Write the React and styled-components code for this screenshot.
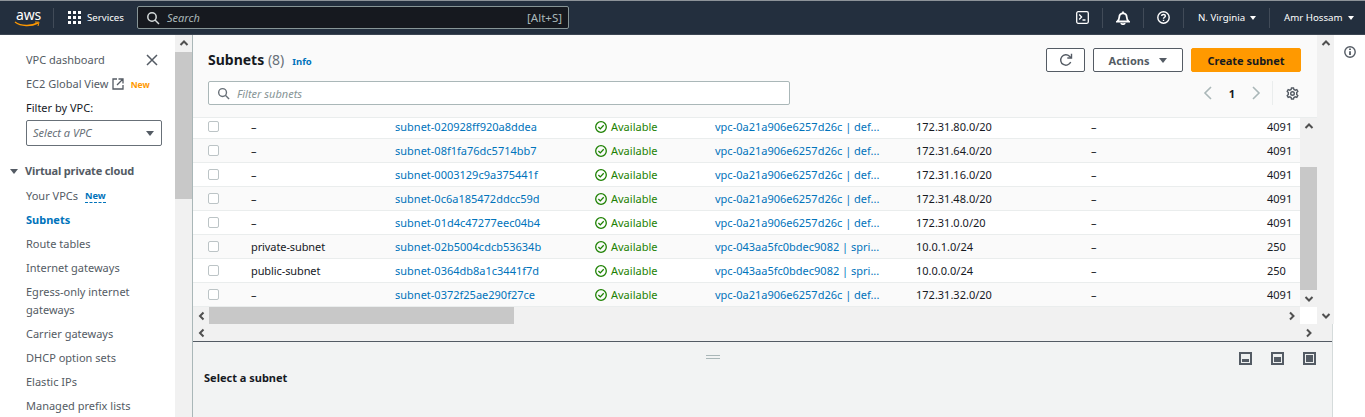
import React from 'react';
import styled, { createGlobalStyle } from 'styled-components';

const GlobalStyle = createGlobalStyle`
  html, body {
    margin: 0;
    padding: 0;
    height: 417px;
    overflow: hidden;
    background: #fff;
    font-family: "Noto Sans", "Open Sans", sans-serif;
    font-size: 11px;
    color: #16191f;
  }
  * { box-sizing: border-box; }
`;

const Page = styled.div`
  width: 1365px;
  height: 417px;
  display: flex;
  flex-direction: column;
  overflow: hidden;
`;

/* top nav */
const Nav = styled.header`
  height: 35px;
  flex: none;
  background: #232f3e;
  border-top: 1px solid #8d9399;
  border-bottom: 1px solid #3b4552;
  display: flex;
  align-items: center;
  color: #fff;
`;

const Logo = styled.div`
  height: 18px;
  margin-left: 14px;
  width: 39px;
  position: relative;
  span {
    display: block;
    margin-left: 2px;
    font-size: 14px;
    line-height: 12px;
    letter-spacing: -0.2px;
  }
  svg {
    position: absolute;
    left: 0;
    top: 12px;
  }
`;

const NavSep = styled.div`
  width: 1px;
  height: 20px;
  background: #414b58;
`;

const Dots = styled.div`
  margin-left: 14px;
  width: 13px;
  height: 13px;
  display: grid;
  grid-template-columns: repeat(3, 3px);
  grid-template-rows: repeat(3, 3px);
  gap: 2px;
  i { background: #fff; }
`;

const ServicesLabel = styled.span`
  margin-left: 6px;
  font-size: 9.7px;
  width: 50px;
`;

const SearchBox = styled.div`
  width: 432px;
  height: 23px;
  background: #16191f;
  border: 1px solid #879596;
  border-radius: 2px;
  display: flex;
  align-items: center;
  padding: 0 6px 0 8px;
  gap: 7px;
  color: #aab7b8;
  em { font-size: 11px; flex: 1; }
  span { font-size: 11.5px; }
`;

const NavRight = styled.div`
  margin-left: auto;
  display: flex;
  align-items: center;
`;

const NavIconCell = styled.div`
  width: ${(p) => p.$w}px;
  display: flex;
  justify-content: center;
`;

const NavMenu = styled.div`
  display: flex;
  align-items: center;
  gap: 5px;
  font-size: 9.7px;
  width: ${(p) => p.$w}px;
  padding-left: ${(p) => p.$pad}px;
`;

const Caret = styled.i`
  width: 0;
  height: 0;
  border-left: ${(p) => p.$size || 3.5}px solid transparent;
  border-right: ${(p) => p.$size || 3.5}px solid transparent;
  border-top: ${(p) => (p.$size || 3.5) + 1}px solid ${(p) => p.$color || '#fff'};
  flex: none;
`;

/* body */
const Body = styled.div`
  flex: 1;
  display: flex;
  min-height: 0;
`;

const Sidebar = styled.aside`
  width: 175px;
  flex: none;
  padding: 13px 0 0 26px;
  color: #545b64;
  line-height: 18px;
  position: relative;
`;

const NavItem = styled.div`
  padding: 3px 0;
  display: flex;
  align-items: center;
  gap: ${(p) => p.$gap || 0}px;
  width: 140px;
  color: ${(p) => (p.$active ? '#0073bb' : '#545b64')};
  font-weight: ${(p) => (p.$active ? 700 : 400)};
`;

const CloseBtn = styled.div`
  position: absolute;
  top: 19px;
  left: 146px;
  line-height: 0;
`;

const FilterLabel = styled.div`
  color: #16191f;
  padding: 3px 0;
`;

const VpcSelect = styled.div`
  width: 136px;
  height: 26px;
  border: 1px solid #687078;
  border-radius: 2px;
  display: flex;
  align-items: center;
  justify-content: space-between;
  padding: 0 7px 0 6px;
  font-style: italic;
  color: #687078;
`;

const SectionTitle = styled.div`
  margin: 13px 0 1px -16px;
  display: flex;
  align-items: center;
  gap: 7px;
  font-weight: 700;
  letter-spacing: -0.15px;
  padding: 3px 0;
`;

const NewTag = styled.span`
  font-size: ${(p) => p.$size}px;
  font-weight: 700;
  color: ${(p) => p.$color};
  line-height: 13px;
  border-bottom: ${(p) => (p.$dotted ? '1px dashed #0073bb' : 'none')};
`;

const VScroll = styled.div`
  width: 17px;
  flex: none;
  background: #f1f1f1;
  display: flex;
  flex-direction: column;
  align-items: center;
`;

const ArrowCell = styled.div`
  height: 17px;
  width: 100%;
  flex: none;
  display: flex;
  align-items: center;
  justify-content: center;
  margin-top: ${(p) => (p.$bottom ? 'auto' : 0)};
`;

const Thumb = styled.div`
  width: 100%;
  height: ${(p) => p.$h}px;
  margin-top: ${(p) => p.$top || 0}px;
  background: #c8c8c8;
`;

const Main = styled.main`
  width: 1141px;
  flex: none;
  display: flex;
  flex-direction: column;
  border-left: 1px solid #aab7b8;
  border-right: 1px solid #d5dbdb;
`;

const MainScroll = styled.div`
  height: 289px;
  flex: none;
  display: flex;
`;

const MainContent = styled.div`
  width: 1124px;
  flex: none;
  display: flex;
  flex-direction: column;
`;

const TableHead = styled.div`
  height: 83px;
  flex: none;
  background: #fafafa;
  border-bottom: 1px solid #eaeded;
  padding: 13px 16px 0 15px;
`;

const HeadTop = styled.div`
  display: flex;
  align-items: center;
  height: 24px;
`;

const Title = styled.h1`
  margin: 0 0 2px;
  font-size: 14px;
  font-weight: 700;
  color: #16191f;
  span { font-weight: 400; color: #687078; }
`;

const InfoLink = styled.a`
  font-size: 9.5px;
  font-weight: 700;
  color: #0073bb;
  margin-left: 8px;
  padding-top: 2px;
`;

const Actions = styled.div`
  margin-left: auto;
  display: flex;
  gap: 8px;
`;

const Button = styled.button`
  width: ${(p) => p.$w}px;
  height: 24px;
  border-radius: 2px;
  border: 1px solid ${(p) => (p.$primary ? '#ff9900' : '#545b64')};
  background: ${(p) => (p.$primary ? '#ff9900' : '#fff')};
  color: ${(p) => (p.$primary ? '#16191f' : '#545b64')};
  font: 700 11px "Noto Sans", sans-serif;
  display: flex;
  align-items: center;
  justify-content: center;
  gap: 10px;
  padding: 0;
`;

const HeadBottom = styled.div`
  display: flex;
  align-items: center;
  height: 24px;
  margin-top: 9px;
`;

const FilterInput = styled.div`
  width: 582px;
  height: 24px;
  background: #fff;
  border: 1px solid #aab7b8;
  border-radius: 2px;
  display: flex;
  align-items: center;
  gap: 7px;
  padding: 0 8px;
  em { color: #879596; }
`;

const Pager = styled.div`
  margin-left: auto;
  display: flex;
  align-items: center;
  height: 24px;
  padding-right: 2px;
  font-weight: 700;
`;

const PageNum = styled.span`
  width: 34px;
  text-align: center;
`;

const PagerSep = styled.div`
  width: 1px;
  height: 24px;
  background: #eaeded;
  margin: 0 13px 0 9px;
`;

const TableWrap = styled.div`
  height: 189px;
  flex: none;
  display: flex;
  overflow: hidden;
`;

const Rows = styled.div`
  width: 1107px;
  flex: none;
  overflow: hidden;
`;

const RowsInner = styled.div`
  margin-top: -3px;
`;

const Row = styled.div`
  height: 24px;
  display: grid;
  grid-template-columns: 59px 143px 200px 120px 201px 175px 176px 33px;
  align-items: center;
  background: ${(p) => (p.$odd ? '#fafafa' : '#fff')};
  border-bottom: 1px solid #eaeded;
  white-space: nowrap;
`;

const CheckCell = styled.div`
  padding-left: 15px;
  line-height: 0;
`;

const Check = styled.i`
  display: inline-block;
  width: 11px;
  height: 11px;
  background: #fff;
  border: 1px solid #bcc4c6;
  border-radius: 2px;
`;

const NameCell = styled.div`
  margin-left: -1px;
  letter-spacing: -0.1px;
`;

const IdLink = styled.a`
  color: #0073bb;
`;

const Status = styled.div`
  color: #1d8102;
  display: flex;
  align-items: center;
  gap: 4px;
`;

const HScroll = styled.div`
  height: 17px;
  flex: none;
  background: #f1f1f1;
  display: flex;
  align-items: stretch;
  width: ${(p) => p.$w}px;
`;

const HArrow = styled.div`
  width: 17px;
  flex: none;
  display: flex;
  align-items: center;
  justify-content: center;
  margin-left: ${(p) => (p.$end ? 'auto' : 0)};
  margin-right: ${(p) => p.$right || 0}px;
`;

const HThumb = styled.div`
  width: 305px;
  margin-left: -1px;
  background: #c8c8c8;
`;

const SplitPanel = styled.section`
  flex: 1;
  background: #f2f3f3;
  border-top: 1px solid #545b64;
  position: relative;
  padding: 27px 0 0 11px;
  font-weight: 700;
  line-height: 18px;
`;

const Grip = styled.div`
  position: absolute;
  left: 513px;
  top: 13px;
  width: 14px;
  height: 4px;
  border-top: 1px solid #aab7b8;
  border-bottom: 1px solid #aab7b8;
`;

const SplitTools = styled.div`
  position: absolute;
  top: 10px;
  right: 16px;
  display: flex;
  gap: 19px;
`;

const SplitIcon = styled.div`
  width: 13px;
  height: 13px;
  border: 2px solid #545b64;
  padding: 1px;
  background: linear-gradient(to top, #545b64 ${(p) => p.$fill}%, #eef0f0 ${(p) => p.$fill}%) content-box, #eef0f0;
`;

const Rail = styled.aside`
  flex: 1;
  padding: 11px 0 0 11px;
`;

function Chevron({ dir = 'up', color = '#505050' }) {
  const d = {
    up: 'M1.5 6 L5 2.5 L8.5 6',
    down: 'M1.5 3 L5 6.5 L8.5 3',
    left: 'M6.5 1.5 L3 5 L6.5 8.5',
    right: 'M3 1.5 L6.5 5 L3 8.5',
  }[dir];
  return (
    <svg width="10" height="10" viewBox="0 0 10 10" fill="none">
      <path d={d} stroke={color} strokeWidth="2" />
    </svg>
  );
}

function PagerChevron({ flip }) {
  return (
    <svg width="14" height="14" viewBox="0 0 14 14" fill="none" stroke="#aab7b8" strokeWidth="1.6">
      <path d={flip ? 'M4 1 L10 7 L4 13' : 'M10 1 L4 7 L10 13'} />
    </svg>
  );
}

function SearchIcon({ color, size = 14 }) {
  return (
    <svg width={size} height={size} viewBox="0 0 14 14" fill="none" stroke={color} strokeWidth="1.5">
      <circle cx="6" cy="6" r="4.2" />
      <path d="M9 9 L13 13" />
    </svg>
  );
}

function TerminalIcon() {
  return (
    <svg width="13" height="13" viewBox="0 0 13 13" fill="none" stroke="#fff" strokeWidth="1.3">
      <rect x="0.7" y="0.7" width="11.6" height="11.6" rx="1.5" />
      <path d="M3.2 3.5 L5.6 6 L3.2 8.5 M6.5 9 H9.5" />
    </svg>
  );
}

function BellIcon() {
  return (
    <svg width="14" height="14" viewBox="0 0 14 14" fill="none" stroke="#fff" strokeWidth="1.8">
      <path d="M1.2 10.5 C3 9.5 3.2 8 3.3 6 C3.4 3.5 5 2.3 7 2.3 C9 2.3 10.6 3.5 10.7 6 C10.8 8 11 9.5 12.8 10.5 Z" />
      <path d="M7 0.5 V2.3 M5.2 12 C5.4 13.6 8.6 13.6 8.8 12" />
    </svg>
  );
}

function HelpIcon() {
  return (
    <svg width="13" height="13" viewBox="0 0 13 13" fill="none" stroke="#fff" strokeWidth="1.4">
      <circle cx="6.5" cy="6.5" r="5.7" />
      <path d="M4.6 5 C4.7 2.9 8.4 2.9 8.4 5 C8.4 6.3 6.5 6.3 6.5 7.8 M6.5 8.8 V10" />
    </svg>
  );
}

function ExternalIcon() {
  return (
    <svg width="12" height="12" viewBox="0 0 12 12" fill="none" stroke="#545b64" strokeWidth="1.3">
      <path d="M5 1 H1 V11 H11 V7 M6.5 1 H11 V5.5 M11 1 L5 7" />
    </svg>
  );
}

function RefreshIcon() {
  return (
    <svg width="14" height="14" viewBox="0 0 14 14" fill="none" stroke="#545b64" strokeWidth="1.4">
      <path d="M11.7 9 A5.2 5.2 0 1 1 10.5 3.2 L12 4.8" />
      <path d="M12.5 0.8 V5 H8.3" />
    </svg>
  );
}

function GearIcon() {
  return (
    <svg width="13" height="13" viewBox="0 0 13 13" fill="none" stroke="#545b64" strokeWidth="1.4">
      <circle cx="6.5" cy="6.5" r="1.8" />
      <path d="M5.5 1 H7.5 L7.9 2.5 L9.3 3.2 L10.8 2.7 L11.8 4.4 L10.7 5.5 V7.5 L11.8 8.6 L10.8 10.3 L9.3 9.8 L7.9 10.5 L7.5 12 H5.5 L5.1 10.5 L3.7 9.8 L2.2 10.3 L1.2 8.6 L2.3 7.5 V5.5 L1.2 4.4 L2.2 2.7 L3.7 3.2 L5.1 2.5 Z" />
    </svg>
  );
}

function CheckCircle() {
  return (
    <svg width="12" height="12" viewBox="0 0 12 12" fill="none" stroke="#1d8102" strokeWidth="1.3">
      <circle cx="6" cy="6" r="5.3" />
      <path d="M3.4 6 L5.3 7.9 L8.7 4.3" />
    </svg>
  );
}

function InfoCircle() {
  return (
    <svg width="12" height="12" viewBox="0 0 12 12" fill="none" stroke="#545b64" strokeWidth="1.4">
      <circle cx="6" cy="6" r="5.2" />
      <path d="M6 5.2 V9 M6 2.6 V4" strokeWidth="1.8" />
    </svg>
  );
}

const subnets = [
  ['–', 'subnet-020928ff920a8ddea', 'vpc-0a21a906e6257d26c | def...', '172.31.80.0/20', '4091'],
  ['–', 'subnet-08f1fa76dc5714bb7', 'vpc-0a21a906e6257d26c | def...', '172.31.64.0/20', '4091'],
  ['–', 'subnet-0003129c9a375441f', 'vpc-0a21a906e6257d26c | def...', '172.31.16.0/20', '4091'],
  ['–', 'subnet-0c6a185472ddcc59d', 'vpc-0a21a906e6257d26c | def...', '172.31.48.0/20', '4091'],
  ['–', 'subnet-01d4c47277eec04b4', 'vpc-0a21a906e6257d26c | def...', '172.31.0.0/20', '4091'],
  ['private-subnet', 'subnet-02b5004cdcb53634b', 'vpc-043aa5fc0bdec9082 | spri...', '10.0.1.0/24', '250'],
  ['public-subnet', 'subnet-0364db8a1c3441f7d', 'vpc-043aa5fc0bdec9082 | spri...', '10.0.0.0/24', '250'],
  ['–', 'subnet-0372f25ae290f27ce', 'vpc-0a21a906e6257d26c | def...', '172.31.32.0/20', '4091'],
];

const navLinks = ['Route tables', 'Internet gateways', 'Egress-only internet gateways', 'Carrier gateways', 'DHCP option sets', 'Elastic IPs', 'Managed prefix lists'];

export default function App() {
  return (
    <Page>
      <GlobalStyle />
      <Nav>
        <Logo>
          <span>aws</span>
          <svg width="26" height="7" viewBox="0 0 26 7" fill="none">
            <path d="M1 1 C7 5.5 17 5.5 24 2" stroke="#f90" strokeWidth="1.4" />
            <path d="M21 1 L25 1.2 L24 5" stroke="#f90" strokeWidth="1" />
          </svg>
        </Logo>
        <NavSep />
        <Dots>{Array.from({ length: 9 }, (_, i) => <i key={i} />)}</Dots>
        <ServicesLabel>Services</ServicesLabel>
        <SearchBox>
          <SearchIcon color="#d5dbdb" />
          <em>Search</em>
          <span>[Alt+S]</span>
        </SearchBox>
        <NavRight>
          <NavIconCell $w={39}><TerminalIcon /></NavIconCell>
          <NavSep />
          <NavIconCell $w={40}><BellIcon /></NavIconCell>
          <NavSep />
          <NavIconCell $w={39}><HelpIcon /></NavIconCell>
          <NavSep />
          <NavMenu $w={85} $pad={14}>N. Virginia <Caret /></NavMenu>
          <NavSep />
          <NavMenu $w={95} $pad={14}>Amr Hossam <Caret /></NavMenu>
        </NavRight>
      </Nav>
      <Body>
        <Sidebar>
          <CloseBtn>
            <svg width="12" height="12" viewBox="0 0 12 12" stroke="#545b64" strokeWidth="1.5">
              <path d="M1 1 L11 11 M11 1 L1 11" />
            </svg>
          </CloseBtn>
          <NavItem>VPC dashboard</NavItem>
          <NavItem $gap={4}>EC2 Global View <ExternalIcon /> <NewTag $color="#ff9900" $size={8.5}>&nbsp;New</NewTag></NavItem>
          <FilterLabel>Filter by VPC:</FilterLabel>
          <VpcSelect>Select a VPC <Caret $size={4.5} $color="#545b64" /></VpcSelect>
          <SectionTitle><Caret $size={4.5} $color="#545b64" />Virtual private cloud</SectionTitle>
          <NavItem $gap={7}>Your VPCs <NewTag $color="#0073bb" $size={9.2} $dotted>New</NewTag></NavItem>
          <NavItem $active>Subnets</NavItem>
          {navLinks.map((l) => <NavItem key={l}>{l}</NavItem>)}
        </Sidebar>
        <VScroll>
          <ArrowCell><Chevron dir="up" /></ArrowCell>
          <Thumb $h={147} />
        </VScroll>
        <Main>
          <MainScroll>
            <MainContent>
              <TableHead>
                <HeadTop>
                  <Title>Subnets <span>(8)</span></Title>
                  <InfoLink>Info</InfoLink>
                  <Actions>
                    <Button $w={39}><RefreshIcon /></Button>
                    <Button $w={90}>Actions <Caret $size={4.5} $color="#545b64" /></Button>
                    <Button $w={110} $primary>Create subnet</Button>
                  </Actions>
                </HeadTop>
                <HeadBottom>
                  <FilterInput>
                    <SearchIcon color="#687078" size={13} />
                    <em>Filter subnets</em>
                  </FilterInput>
                  <Pager>
                    <PagerChevron />
                    <PageNum>1</PageNum>
                    <PagerChevron flip />
                    <PagerSep />
                    <GearIcon />
                  </Pager>
                </HeadBottom>
              </TableHead>
              <TableWrap>
                <Rows>
                  <RowsInner>
                    {subnets.map((s, i) => (
                      <Row key={s[1]} $odd={i % 2 === 1}>
                        <CheckCell><Check /></CheckCell>
                        <NameCell>{s[0]}</NameCell>
                        <IdLink>{s[1]}</IdLink>
                        <Status><CheckCircle />Available</Status>
                        <IdLink>{s[2]}</IdLink>
                        <div>{s[3]}</div>
                        <div>–</div>
                        <div>{s[4]}</div>
                      </Row>
                    ))}
                  </RowsInner>
                </Rows>
                <VScroll>
                  <ArrowCell><Chevron dir="up" /></ArrowCell>
                  <Thumb $top={32} $h={123} />
                  <ArrowCell $bottom><Chevron dir="down" /></ArrowCell>
                </VScroll>
              </TableWrap>
              <HScroll $w={1107}>
                <HArrow><Chevron dir="left" /></HArrow>
                <HThumb />
                <HArrow $end><Chevron dir="right" /></HArrow>
              </HScroll>
            </MainContent>
            <VScroll>
              <ArrowCell><Chevron dir="up" /></ArrowCell>
              <ArrowCell $bottom><Chevron dir="down" /></ArrowCell>
            </VScroll>
          </MainScroll>
          <HScroll $w={1139}>
            <HArrow><Chevron dir="left" /></HArrow>
            <HArrow $end $right={15}><Chevron dir="right" /></HArrow>
          </HScroll>
          <SplitPanel>
            <Grip />
            Select a subnet
            <SplitTools>
              <SplitIcon $fill={45} />
              <SplitIcon $fill={70} />
              <SplitIcon $fill={100} />
            </SplitTools>
          </SplitPanel>
        </Main>
        <Rail><InfoCircle /></Rail>
      </Body>
    </Page>
  );
}
